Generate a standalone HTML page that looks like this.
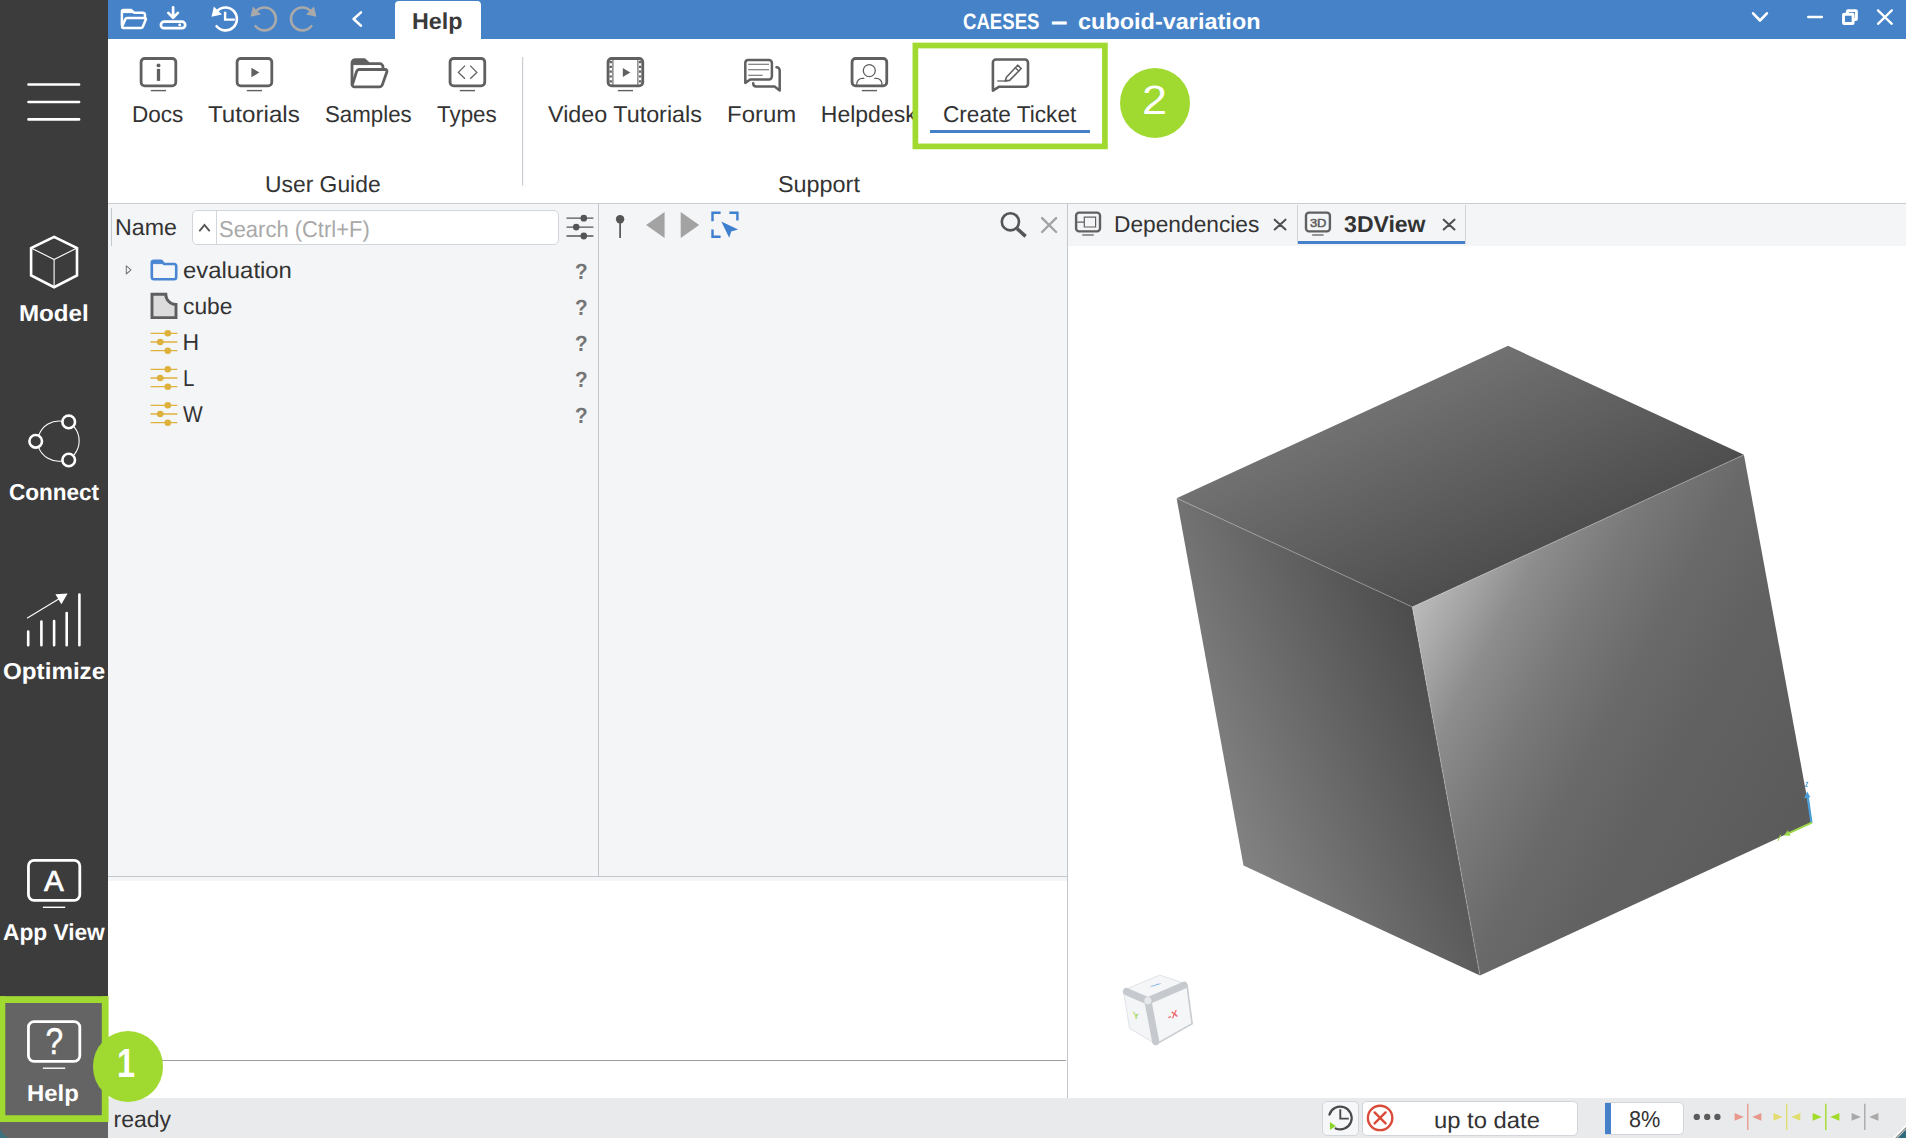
<!DOCTYPE html>
<html lang="en">
<head>
<meta charset="utf-8">
<title>CAESES – cuboid-variation</title>
<style>
html,body{margin:0;padding:0}
body{width:1906px;height:1138px;position:relative;overflow:hidden;background:#fff;font-family:"Liberation Sans",sans-serif;color:#333}
.abs,.t,svg.ic{position:absolute}
.t{white-space:nowrap;display:block;transform-origin:0 0;text-rendering:geometricPrecision}
svg.ic{left:0;top:0;overflow:visible;pointer-events:none}
#sidebar{left:0;top:0;width:108px;height:1138px;background:#3c3c3c}
#sidebar .sel{left:0;top:996px;width:108px;height:142px;background:#646464}
#titlebar{left:108px;top:0;width:1798px;height:39px;background:#4682c8}
#helptab{left:395px;top:1px;width:86px;height:40px;background:#fff;border-radius:4px 4px 0 0}
#ribbon{left:108px;top:39px;width:1798px;height:164px;background:#fff;border-bottom:1px solid #c9ccd1}
#work{left:108px;top:204px;width:1798px;height:894px;background:#f4f5f7}
#console{left:108px;top:881px;width:959px;height:217px;background:#fff}
#console i{position:absolute;left:0;top:178.6px;width:958px;height:1.3px;background:#9c9c9c}
#view{left:1068px;top:246px;width:838px;height:852px;background:#fff}
.vl{width:1px;background:#c3c6cd}
#search{left:192px;top:210px;width:367px;height:35px;box-sizing:border-box;border:1px solid #d2d5da;border-radius:5px;background:#fff}
#search i{position:absolute;left:22.5px;top:0;width:1px;height:100%;background:#d2d5da}
#statusbar{left:108px;top:1098px;width:1798px;height:40px;background:#e9eaec}
.box{box-sizing:border-box;border:1px solid #d2d5da;border-radius:5px;background:#fff}
.hl{box-sizing:border-box;border:6px solid #a0d930}
.badge{width:70.8px;height:70.8px;border-radius:50%;background:#a0d930}
</style>
</head>
<body>

<!-- ============ left navigation ============ -->
<nav id="sidebar" class="abs">
  <div class="sel abs"></div>
</nav>

<!-- ============ title bar ============ -->
<header id="titlebar" class="abs"></header>
<div id="helptab" class="abs"></div>

<!-- ============ ribbon ============ -->
<section id="ribbon" class="abs"></section>

<!-- ============ work area ============ -->
<main id="work" class="abs"></main>
<div id="search" class="abs"><i></i></div>
<div class="abs vl" style="left:111px;top:208px;height:38px;background:#c4c7cc"></div>
<div class="abs vl" style="left:598px;top:204px;height:673px"></div>
<div class="abs" style="left:108px;top:876px;width:959px;height:1px;background:#c3c6cd"></div>
<div class="abs vl" style="left:1067px;top:204px;height:894px"></div>
<div id="console" class="abs"><i></i></div>
<div id="view" class="abs"></div>
<!-- tab strip -->
<div class="abs vl" style="left:1297px;top:205px;height:39px;background:#d0d3d8"></div>
<div class="abs vl" style="left:1465px;top:205px;height:39px;background:#d0d3d8"></div>
<div class="abs" style="left:1298px;top:241px;width:167px;height:3px;background:#4680c8"></div>

<!-- ============ status bar ============ -->
<footer id="statusbar" class="abs"></footer>
<div class="abs box" style="left:1322px;top:1101px;width:37px;height:35px;background:#f6f7f8"></div>
<div class="abs box" style="left:1362px;top:1101px;width:216px;height:35px"></div>
<div class="abs box" style="left:1605px;top:1102px;width:79px;height:33px;border-radius:0 5px 5px 0"></div><div class="abs" style="left:1605px;top:1103px;width:6px;height:31px;background:#4680c8"></div>

<!-- ============ icons ============ -->
<svg class="ic" width="1906" height="1138" viewBox="0 0 1906 1138" fill="none" stroke-linecap="round" stroke-linejoin="round">
<defs>
  <g id="mon"><rect x="-17.35" y="58.5" width="34.7" height="27.4" rx="3.6" stroke-width="2.8"/><path d="M-7.6,90.6H7.6" stroke-width="1.4" stroke-linecap="butt"/></g>
  <g id="sld"><path d="M0,-8.7H26.9M0,0H26.9M0,8.7H26.9" stroke-width="1.3" stroke-linecap="butt"/><circle cx="17.3" cy="-8.7" r="3.3" stroke="none"/><circle cx="9.7" cy="0" r="3.3" stroke="none"/><circle cx="17.3" cy="8.7" r="3.3" stroke="none"/></g>
  <g id="mk"><path d="M0,-13.2V13.2" stroke-width="1.4" stroke-linecap="butt" fill="none"/><path d="M-13.2,-3.8L-3.9,0L-13.2,3.8ZM13.6,-3.8L4.4,0L13.6,3.8Z" stroke="none"/></g>
</defs>

<!-- title bar quick-access icons -->
<g stroke="#fff" stroke-width="2.7">
  <!-- open -->
  <path d="M121.9,25V11.5a1.6,1.6 0 0 1 1.6,-1.6H131l3,2.8H142.6a2.4,2.4 0 0 1 2.4,2.4V17" stroke-width="2.5"/>
  <path d="M122.6,10.2H131.3L134,12.6L122.6,12.6Z" fill="#fff" stroke-width="1"/>
  <path d="M127.1,18H144.7a1.2,1.2 0 0 1 1.1,1.6L142.8,26.7a2,2 0 0 1 -1.9,1.3H123.3a1.2,1.2 0 0 1 -1.1,-1.6L125.3,19.2a2,2 0 0 1 1.8,-1.2Z" stroke-width="2.5"/>
  <!-- save -->
  <path d="M173.1,7.3V17.2M168.3,12.9L173.1,17.7L177.9,12.9" stroke-width="2.7"/>
  <rect x="160.9" y="21.7" width="24.3" height="6.5" rx="3.2"/>
  <circle cx="179.7" cy="24.95" r="1.4" fill="#fff" stroke="none"/>
  <!-- history -->
  <path d="M217.2,11.0A11.45,11.45 0 1 1 216.6,26.2" stroke-width="2.6"/>
  <path d="M211.5,16.7L213.9,6.6L221.9,14.4Z" fill="#fff" stroke="none"/>
  <path d="M225.1,11.7V19.6H234.8" stroke-width="2.4" stroke-linecap="butt" stroke-linejoin="miter"/>
  <!-- collapse chevron -->
  <path d="M361,12.4L353.6,19.05L361,25.7" stroke-width="2.5"/>
</g>
<g stroke="#a9a9a9" stroke-width="2.6">
  <path d="M256.2,11.0A11.45,11.45 0 1 1 255.6,26.2"/>
  <path d="M250.5,16.7L252.9,6.6L260.9,14.4Z" fill="#a9a9a9" stroke="none"/>
  <path d="M310.7,11.0A11.45,11.45 0 1 0 311.3,26.2"/>
  <path d="M316.4,16.7L314,6.6L306,14.4Z" fill="#a9a9a9" stroke="none"/>
</g>
<!-- window controls -->
<g stroke="#fff" stroke-width="2.3">
  <path d="M1753.1,13.3L1760,20.5L1766.9,13.3" stroke-width="2.6"/>
  <path d="M1808.3,17.05H1821.8" stroke-width="2.6"/>
  <path d="M1878,10.4L1891.8,23.8M1891.8,10.4L1878,23.8"/>
  <g stroke-width="2.9" stroke-linejoin="round"><rect x="1843.5" y="14.2" width="9.6" height="9.3" rx="0.6"/><path d="M1847.4,13.4V11.2a0.6,0.6 0 0 1 .6,-.6H1855.8a0.6,0.6 0 0 1 .6,.6V18.9a0.6,0.6 0 0 1 -.6,.6H1854"/></g>
</g>

<!-- sidebar icons -->
<g stroke="#fff" stroke-width="2.6">
  <path d="M28.5,84.5H79.1M28.5,102H79.1M28.5,119.4H79.1"/>
  <!-- model -->
  <path d="M54.1,236.9L77,248.1V275.5L54.1,287.2L31.1,275.5V248.1Z" stroke-linejoin="miter"/>
  <path d="M31.5,248.3L54.1,259.4L76.6,248.3M54.1,259.4V287" stroke-width="1.1"/>
  <!-- connect -->
  <path d="M62.2,421.2A21.6,21.6 0 0 0 38.8,435.2M38.6,447.4A21.6,21.6 0 0 0 62,461M74.2,454.6A21.6,21.6 0 0 0 74.3,427.2" stroke-width="1.1"/>
  <circle cx="68.7" cy="421.9" r="6.3"/><circle cx="35.7" cy="441.3" r="6.3"/><circle cx="68.7" cy="460" r="6.3"/>
  <!-- optimize -->
  <path d="M28.2,631.5V645.3M41.4,621.5V645.3M54.1,621V645.3M66.7,613.1V645.3M79.4,594.6V645.3"/>
  <path d="M27.4,618L62,597" stroke-width="1.1"/>
  <path d="M67.6,593.5L55.4,594.3L61.4,604.2Z" fill="#fff" stroke="none"/>
  <!-- app view -->
  <rect x="28.45" y="860.45" width="51.35" height="39.9" rx="5.6" stroke-width="2.8"/>
  <path d="M42.9,907.3H65.2" stroke-width="1.4" stroke-linecap="butt"/>
  <!-- help -->
  <rect x="28.45" y="1021.55" width="51.35" height="39.75" rx="5.6" stroke-width="2.8"/>
  <path d="M42.9,1068.2H65.2" stroke-width="1.4" stroke-linecap="butt"/>
</g>
<text x="44.1" y="891" font-size="30.4" fill="#fff" stroke="#fff" stroke-width="0.7" font-family="Liberation Sans,sans-serif" textLength="19.8" lengthAdjust="spacingAndGlyphs">A</text>
<text x="45.4" y="1054.2" font-size="36" fill="#fff" stroke="#fff" stroke-width="0.5" font-family="Liberation Sans,sans-serif" textLength="17.6" lengthAdjust="spacingAndGlyphs">?</text>
</svg>
<svg class="ic" width="1906" height="1138" viewBox="0 0 1906 1138" fill="none" stroke="#606060" stroke-linecap="round" stroke-linejoin="round">
<!-- ribbon icons -->
<use href="#mon" x="158.45"/>
<circle cx="158.5" cy="65.4" r="1.95" fill="#606060" stroke="none"/><path d="M158.5,68.9V80.9" stroke-width="3.3" stroke-linecap="butt"/>
<use href="#mon" x="254.45"/>
<path d="M251.4,67.8V77.2L259.3,72.5Z" fill="#606060" stroke="none"/>
<!-- samples folder -->
<g stroke-width="2.8">
  <path d="M352,84.5V63a3.3,3.3 0 0 1 3.3,-3.3H364.6l4.4,4H379.7a3.3,3.3 0 0 1 3.3,3.3V68.6"/>
  <path d="M352.6,59.9H364.8L368.9,63.7V64.6H352.6Z" fill="#606060" stroke-width="1"/>
  <path d="M358.9,69.5H385.3a1.7,1.7 0 0 1 1.6,2.3L382.4,84.6a3.2,3.2 0 0 1 -3,2.2H354a1.7,1.7 0 0 1 -1.6,-2.3L356.6,71.5a3,3 0 0 1 2.3,-2Z"/>
</g>
<use href="#mon" x="467.4"/>
<path d="M465,65.6L458.4,72.4L465,78.8M470.2,65.6L476.8,72.4L470.2,78.8" stroke-width="1.3" stroke-linecap="butt" stroke-linejoin="miter"/>
<!-- video tutorials -->
<use href="#mon" x="625.4"/>
<path d="M612.9,59V85.5M637.9,59V85.5" stroke-width="1.1"/>
<path d="M610.7,61V84M640.1,61V84" stroke-width="2.4" stroke-dasharray="2.2 2.6" stroke-linecap="butt"/>
<path d="M622.8,68.1V77.1L630.3,72.6Z" fill="#606060" stroke="none"/>
<!-- forum -->
<g stroke-width="2.5">
  <path d="M748,60H769a2.9,2.9 0 0 1 2.9,2.9V76.6a2.9,2.9 0 0 1 -2.9,2.9H750.2L745.3,82.9V62.9A2.9,2.9 0 0 1 748,60Z"/>
  <path d="M776.5,67.2a3.2,3.2 0 0 1 3.2,3.2V90.4L774.6,86.6H756.2a3.2,3.2 0 0 1 -3,-3.3"/>
  <path d="M748.2,64.2H769M748.2,69.7H769M748.2,75.2H762.7" stroke-width="1.1" stroke-linecap="butt"/>
</g>
<!-- helpdesk -->
<use href="#mon" x="869.4"/>
<circle cx="869.3" cy="70.6" r="6" stroke-width="1.3"/>
<path d="M856.8,84.6V83.8a5.4,5.4 0 0 1 5.4,-5.4h1.6M881.9,84.6V83.8a5.4,5.4 0 0 0 -5.4,-5.4h-1.6" stroke-width="1.3"/>
<!-- create ticket -->
<path d="M996,59.5H1025a3,3 0 0 1 3,3V83.7a3,3 0 0 1 -3,3H999.2L992.9,90.6V62.5A3,3 0 0 1 996,59.5Z" stroke-width="2.6"/>
<path d="M997.3,81H1007" stroke-width="1.3" stroke-linecap="butt"/>
<path d="M1005.2,80.9L1006.4,77.2L1017.7,65.2L1021.2,68.5L1009.6,80.4Z" stroke-width="1.6"/>
<path d="M1015.3,67.7L1018.8,71" stroke-width="1.3"/>
<!-- ribbon group separator -->
<path d="M522.6,57V185.5" stroke="#c9ccd1" stroke-width="1.2" stroke-linecap="butt"/>
</svg>
<svg class="ic" width="1906" height="1138" viewBox="0 0 1906 1138" fill="none" stroke-linecap="round" stroke-linejoin="round">
<!-- search box chevron -->
<path d="M199.8,230.6L204.5,225L209.2,230.6" stroke="#555" stroke-width="1.9" stroke-linejoin="miter"/>
<!-- tree -->
<path d="M126.3,265.8L131,269.9L126.3,274Z" stroke="#777" stroke-width="1.05"/>
<g stroke="#4a86d2" stroke-width="2.4">
  <path d="M151.8,263.5V262.8a2,2 0 0 1 2,-2H161.4l2.6,3.2H174a2.2,2.2 0 0 1 2.2,2.2V277a2.2,2.2 0 0 1 -2.2,2.2H154a2.2,2.2 0 0 1 -2.2,-2.2Z" fill="#f5f6f9" stroke-width="2.6"/>
  <path d="M152.3,261H161.5L163.6,263.6H152.3Z" fill="#4a86d2" stroke-width="1"/>
</g>
<path d="M152,294.2H165.8A10.2,10.2 0 0 0 176,304.4V317.6H152Z" fill="#dcdcdc" stroke="#5e5e5e" stroke-width="2.9" stroke-linejoin="miter"/>
<g fill="#deb03c" stroke="#deb03c">
  <use href="#sld" x="150.5" y="342"/><use href="#sld" x="150.5" y="378"/><use href="#sld" x="150.5" y="414"/>
</g>
<!-- column options -->
<g fill="#555" stroke="#555" transform="translate(566.5,227.1) scale(1,1.023)"><use href="#sld"/></g>
<!-- property panel header -->
<circle cx="620.1" cy="219.2" r="4.2" fill="#555"/>
<path d="M620.1,219V238" stroke="#555" stroke-width="1.7" stroke-linecap="butt"/>
<path d="M646.1,224.9L664.6,212V238ZM699.2,224.9L680.7,212V238Z" fill="#a3a3a3"/>
<g stroke="#3f7fcf" stroke-width="2.4" stroke-linecap="butt" stroke-linejoin="miter">
  <path d="M712.5,221.2V212.8H720.6M729.4,212.8H737.4V220.4M712.5,229.6V236.8H720.6"/>
  <path d="M721.3,221.5L738.1,229.4L731.2,231.5L729.2,237.8Z" fill="#3f7fcf" stroke="none"/>
</g>
<circle cx="1010.4" cy="221.8" r="8.6" stroke="#555" stroke-width="2.6"/>
<path d="M1017,228.6L1025.6,236.4" stroke="#555" stroke-width="3.5" stroke-linecap="butt"/>
<path d="M1042.1,218.1L1056.1,232M1056.1,218.1L1042.1,232" stroke="#a3a3a3" stroke-width="2.4"/>
<!-- tabs -->
<g stroke="#606060" stroke-width="2.4">
  <rect x="1076.1" y="212.6" width="23.9" height="18.8" rx="3"/>
  <path d="M1082.3,235H1093.7" stroke-width="1.3" stroke-linecap="butt"/>
  <path d="M1084.3,217.2H1095.6V227H1084.3ZM1077.4,222.1H1084.3" stroke-width="1.2" stroke-linejoin="miter"/>
  <rect x="1306" y="212.6" width="23.9" height="18.8" rx="3"/>
  <path d="M1312.2,235H1323.6" stroke-width="1.3" stroke-linecap="butt"/>
</g>
<text x="1318.2" y="227.2" font-size="11.8" text-anchor="middle" fill="#606060" stroke="#606060" stroke-width="0.55" font-family="Liberation Sans,sans-serif" textLength="16.6" lengthAdjust="spacingAndGlyphs">3D</text>
<path d="M1274.7,219.7L1285.5,229.5M1285.5,219.7L1274.7,229.5M1443.7,219.7L1454.5,229.5M1454.5,219.7L1443.7,229.5" stroke="#505050" stroke-width="2.1"/>

<!-- status bar -->
<path d="M1329.4,1114.6A11.4,11.4 0 1 1 1335.6,1128.4" stroke="#4a4a4a" stroke-width="2.2"/>
<path d="M1340.3,1109.2V1118.6H1348.8" stroke="#4a4a4a" stroke-width="1.9" stroke-linecap="butt" stroke-linejoin="miter"/>
<path d="M1329.9,1122.1V1130L1335.9,1126.1Z" fill="#8cd62c"/>
<circle cx="1380.1" cy="1117.9" r="12.2" stroke="#d94c3a" stroke-width="2.4"/>
<path d="M1374.6,1112.4L1385.6,1123.4M1385.6,1112.4L1374.6,1123.4" stroke="#d94c3a" stroke-width="2.4"/>
<g fill="#5c5c5c"><circle cx="1696.8" cy="1116.9" r="3.15"/><circle cx="1707.2" cy="1116.9" r="3.15"/><circle cx="1717.4" cy="1116.9" r="3.15"/></g>
<g fill="#e8998d" stroke="#e8998d"><use href="#mk" x="1747.8" y="1116.9"/></g>
<g fill="#e2dd70" stroke="#e2dd70"><use href="#mk" x="1786.7" y="1116.9"/></g>
<g fill="#a2dc2a" stroke="#a2dc2a"><use href="#mk" x="1825.8" y="1116.9"/></g>
<g fill="#a9a9a9" stroke="#a9a9a9"><use href="#mk" x="1864.8" y="1116.9"/></g>
<path d="M1897.6,1138L1906,1129.4V1138Z" fill="#2f6b7b"/><path d="M1893.4,1138.6L1906.6,1125" stroke="#fff" stroke-width="1.7" stroke-linecap="butt"/><path d="M1895.4,1138.6L1906.6,1127.2" stroke="#8a8a8a" stroke-width="1.2" stroke-linecap="butt"/><path d="M0,1128.6Q2.5,1135.5 8.8,1138H0Z" fill="#3b7280"/>
</svg>
<svg class="ic" width="1906" height="1138" viewBox="0 0 1906 1138" fill="none" stroke-linecap="round" stroke-linejoin="round">
<defs>
  <linearGradient id="gTop" gradientUnits="userSpaceOnUse" x1="1176.6" y1="498.2" x2="1259" y2="677.4">
    <stop offset="0" stop-color="#717171"/><stop offset="1" stop-color="#4e4e4e"/>
  </linearGradient>
  <linearGradient id="gLeft" gradientUnits="userSpaceOnUse" x1="1243.5" y1="865.6" x2="1478.6" y2="770.2">
    <stop offset="0" stop-color="#828282"/><stop offset="1" stop-color="#4c4c4c"/>
  </linearGradient>
  <linearGradient id="gFront" gradientUnits="userSpaceOnUse" x1="1412.3" y1="606.9" x2="1811.6" y2="822.6">
    <stop offset="0" stop-color="#bbb"/><stop offset="0.088" stop-color="#a6a6a6"/><stop offset="0.187" stop-color="#8d8d8d"/>
    <stop offset="0.333" stop-color="#797979"/><stop offset="0.491" stop-color="#6a6a6a"/><stop offset="0.654" stop-color="#626262"/>
    <stop offset="0.914" stop-color="#5c5c5c"/><stop offset="1" stop-color="#5b5b5b"/>
  </linearGradient>
</defs>
<!-- 3D model -->
<path d="M1176.6,498.2L1508.1,345.8L1743.9,454.8L1412.3,606.9Z" fill="url(#gTop)"/>
<path d="M1176.6,498.2L1412.3,606.9L1480,975.5L1243.5,865.6Z" fill="url(#gLeft)"/>
<path d="M1412.3,606.9L1743.9,454.8L1811.6,822.6L1480,975.5Z" fill="url(#gFront)"/>
<path d="M1176.6,498.2L1412.3,606.9L1743.9,454.8M1412.3,606.9L1480,975.5" stroke="#fff" stroke-opacity="0.16" stroke-width="1.4"/>
<!-- origin axes -->
<path d="M1811.4,822.4L1807.6,796" stroke="#4a9ed8" stroke-width="2.2"/>
<path d="M1807.2,791.6L1804,798.3L1810.4,797.3Z" fill="#4a9ed8"/>
<path d="M1806.2,782.4H1808L1805.4,786.4H1807.4" stroke="#4a9ed8" stroke-width="1"/>
<path d="M1811.2,822.9L1789.5,832.8" stroke="#9cd848" stroke-width="2"/>
<path d="M1783.9,835.5L1787.9,830.2L1790.6,835.7Z" fill="#9cd848"/>
<path d="M1780.5,835.2L1778.2,840.4" stroke="#9cd848" stroke-width="1.1"/>
<!-- navigation cube -->
<g stroke="#dfe2e6" stroke-width="1">
  <path d="M1123.7,990.3L1159.7,975.1L1186.5,984.2L1147.9,1000.9Z" fill="#f5f6f8"/>
  <path d="M1123.7,990.3L1147.9,1000.9L1156.2,1044.3L1129.9,1028.5Z" fill="#f4f5f7"/>
  <path d="M1147.9,1000.9L1186.5,984.2L1192.2,1024.1L1156.2,1044.3Z" fill="#f5f6f8"/>
</g>
<path d="M1126.5,991.6L1147.9,1000.9L1184,985.3M1147.9,1000.9L1155.7,1041.6" stroke="#c6cace" stroke-width="7.2"/>
<path d="M1187.2,986L1192.1,1023.6L1157.5,1043.4" stroke="#c9cdd2" stroke-width="1.6"/>
<circle cx="1147.9" cy="1000.6" r="3.6" fill="#e6e8eb"/>
<g font-family="Liberation Sans,sans-serif" font-weight="700">
  <text transform="matrix(1,-0.42,0.14,1,1168.6,1020.2)" font-size="9.5" fill="#f06468">-X</text>
  <text transform="matrix(1,0.5,0.1,1,1133.2,1017.6)" font-size="9" fill="#a9d868">Y</text>
  <text transform="matrix(1.25,-0.1,-1.1,0.45,1149.4,986.6)" font-size="8" fill="#5aa8e2">Z</text>
</g>
</svg>


<!-- ============ text ============ -->
<div id="txt-title"><span class="t" style="left:412.18px;top:10.30px;font-size:23px;line-height:23px;font-weight:700;transform:scaleX(1.0126);color:#3a3a3a">Help</span>
<span class="t" style="left:963.27px;top:11.30px;font-size:22.3px;line-height:22.3px;font-weight:700;transform:scaleX(0.8345);color:#fff">CAESES</span>
<span class="t" style="left:1050.61px;top:7.30px;font-size:30px;line-height:30px;font-weight:700;transform:scaleX(0.9898);color:#fff">–</span>
<span class="t" style="left:1077.55px;top:11.30px;font-size:22.3px;line-height:22.3px;font-weight:700;transform:scaleX(1.0526);color:#fff">cuboid-variation</span></div>
<div id="txt-ribbon"><span class="t" style="left:132.04px;top:103.30px;font-size:23px;line-height:23px;transform:scaleX(0.9798);color:#333">Docs</span>
<span class="t" style="left:208.37px;top:103.30px;font-size:23px;line-height:23px;transform:scaleX(1.0512);color:#333">Tutorials</span>
<span class="t" style="left:325.23px;top:103.30px;font-size:23px;line-height:23px;transform:scaleX(0.9687);color:#333">Samples</span>
<span class="t" style="left:437.41px;top:103.30px;font-size:23px;line-height:23px;transform:scaleX(0.9733);color:#333">Types</span>
<span class="t" style="left:264.96px;top:173.30px;font-size:23px;line-height:23px;transform:scaleX(0.9938);color:#333">User Guide</span>
<span class="t" style="left:548.25px;top:103.30px;font-size:23px;line-height:23px;transform:scaleX(1.0143);color:#333">Video Tutorials</span>
<span class="t" style="left:726.92px;top:103.30px;font-size:23px;line-height:23px;transform:scaleX(1.0413);color:#333">Forum</span>
<span class="t" style="left:820.80px;top:103.30px;font-size:23px;line-height:23px;color:#333">Helpdesk</span>
<span class="t" style="left:942.77px;top:103.30px;font-size:23px;line-height:23px;transform:scaleX(0.9836);color:#333">Create Ticket</span>
<span class="t" style="left:777.78px;top:173.30px;font-size:23px;line-height:23px;transform:scaleX(1.0164);color:#333">Support</span></div>
<div id="txt-tree"><span class="t" style="left:115.38px;top:216.30px;font-size:23px;line-height:23px;transform:scaleX(1.0094);color:#333">Name</span>
<span class="t" style="left:218.95px;top:218.30px;font-size:23px;line-height:23px;transform:scaleX(0.9550);color:#a9a9a9">Search (Ctrl+F)</span>
<span class="t" style="left:182.76px;top:259.30px;font-size:23px;line-height:23px;transform:scaleX(1.0386);color:#333">evaluation</span>
<span class="t" style="left:182.81px;top:295.30px;font-size:23px;line-height:23px;transform:scaleX(0.9906);color:#333">cube</span>
<span class="t" style="left:182.59px;top:331.30px;font-size:23px;line-height:23px;color:#333">H</span>
<span class="t" style="left:182.82px;top:367.30px;font-size:23px;line-height:23px;transform:scaleX(0.8900);color:#333">L</span>
<span class="t" style="left:183.17px;top:403.30px;font-size:23px;line-height:23px;transform:scaleX(0.9082);color:#333">W</span>
<span class="t" style="left:575.16px;top:261.30px;font-size:22px;line-height:22px;font-weight:700;transform:scaleX(0.9422);color:#757575">?</span>
<span class="t" style="left:575.16px;top:297.30px;font-size:22px;line-height:22px;font-weight:700;transform:scaleX(0.9422);color:#757575">?</span>
<span class="t" style="left:575.16px;top:333.30px;font-size:22px;line-height:22px;font-weight:700;transform:scaleX(0.9422);color:#757575">?</span>
<span class="t" style="left:575.16px;top:369.30px;font-size:22px;line-height:22px;font-weight:700;transform:scaleX(0.9422);color:#757575">?</span>
<span class="t" style="left:575.16px;top:405.30px;font-size:22px;line-height:22px;font-weight:700;transform:scaleX(0.9422);color:#757575">?</span></div>
<div id="txt-tabs"><span class="t" style="left:1113.82px;top:213.30px;font-size:23px;line-height:23px;transform:scaleX(0.9886);color:#333">Dependencies</span>
<span class="t" style="left:1344.10px;top:213.30px;font-size:23px;line-height:23px;font-weight:700;color:#333">3DView</span></div>
<div id="txt-side"><span class="t" style="left:18.63px;top:302.30px;font-size:23px;line-height:23px;font-weight:700;transform:scaleX(1.0498);color:#fff">Model</span>
<span class="t" style="left:9.02px;top:481.30px;font-size:23px;line-height:23px;font-weight:700;transform:scaleX(0.9796);color:#fff">Connect</span>
<span class="t" style="left:2.95px;top:660.30px;font-size:23px;line-height:23px;font-weight:700;transform:scaleX(1.0520);color:#fff">Optimize</span>
<span class="t" style="left:2.91px;top:921.30px;font-size:23px;line-height:23px;font-weight:700;transform:scaleX(0.9873);color:#fff">App View</span>
<span class="t" style="left:27.44px;top:1082.30px;font-size:23px;line-height:23px;font-weight:700;transform:scaleX(1.0379);color:#fff">Help</span></div>
<div id="txt-status"><span class="t" style="left:113.50px;top:1108.30px;font-size:23px;line-height:23px;color:#333">ready</span>
<span class="t" style="left:1434.45px;top:1109.30px;font-size:23px;line-height:23px;transform:scaleX(1.0356);color:#333">up to date</span>
<span class="t" style="left:1628.76px;top:1108.30px;font-size:23px;line-height:23px;transform:scaleX(0.9429);color:#333">8%</span></div>

<!-- ============ tutorial highlights ============ -->
<div class="abs" style="left:930px;top:129.5px;width:160px;height:3px;background:#4680c8"></div>
<svg class="ic" width="1906" height="1138" viewBox="0 0 1906 1138" fill="none" stroke="#a0d930" stroke-width="5.7"><rect x="915.4" y="45.5" width="189.5" height="100.9"/></svg>
<div class="abs badge" style="left:1119.7px;top:67.6px"></div>
<svg class="ic" width="1906" height="1138" viewBox="0 0 1906 1138" fill="none" stroke="#a0d930"><path d="M-3,999.55H105.15V1118.55H-3" stroke-width="6.7"/><path d="M2.35,996.2V1121.9M105.2,996.2V1121.9" stroke-width="5.9" /></svg>
<div class="abs badge" style="left:92.6px;top:1030.9px"></div>
<div id="txt-badge"><span class="t" style="left:1141.80px;top:80.30px;font-size:41px;line-height:41px;transform:scaleX(1.0987);color:#fff">2</span>
<span class="t" style="left:116.65px;top:1043.30px;font-size:40.6px;line-height:40.6px;font-weight:700;transform:scaleX(0.8000);color:#fff">1</span></div>

</body>
</html>
